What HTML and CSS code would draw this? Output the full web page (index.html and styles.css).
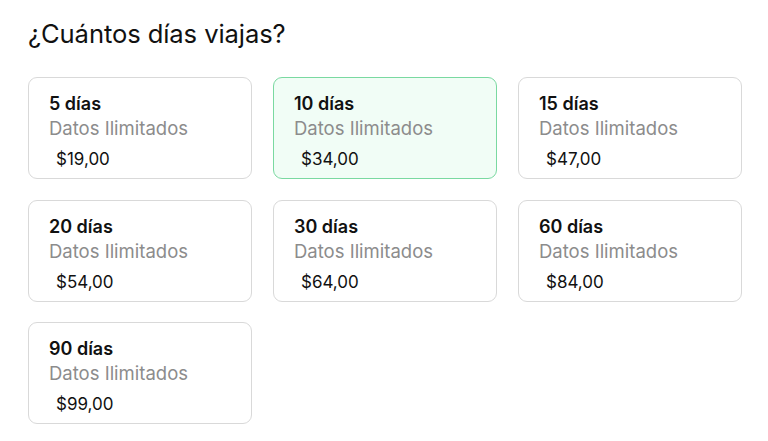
FILE: index.html
```html
<html>

<head>
    <meta charset="utf-8">
    <link rel="stylesheet" href="styles.css">
</head>

<body>
    <div class="page">
        <h1 class="title">¿Cuántos días viajas?</h1>

        <div class="plans">
            <div class="plan">
                <div class="plan-days">5 días</div>
                <div class="plan-data">Datos Ilimitados</div>
                <div class="plan-price">$19,00</div>
            </div>
            <div class="plan selected">
                <div class="plan-days">10 días</div>
                <div class="plan-data">Datos Ilimitados</div>
                <div class="plan-price">$34,00</div>
            </div>
            <div class="plan">
                <div class="plan-days">15 días</div>
                <div class="plan-data">Datos Ilimitados</div>
                <div class="plan-price">$47,00</div>
            </div>
            <div class="plan">
                <div class="plan-days">20 días</div>
                <div class="plan-data">Datos Ilimitados</div>
                <div class="plan-price">$54,00</div>
            </div>
            <div class="plan">
                <div class="plan-days">30 días</div>
                <div class="plan-data">Datos Ilimitados</div>
                <div class="plan-price">$64,00</div>
            </div>
            <div class="plan">
                <div class="plan-days">60 días</div>
                <div class="plan-data">Datos Ilimitados</div>
                <div class="plan-price">$84,00</div>
            </div>
            <div class="plan">
                <div class="plan-days">90 días</div>
                <div class="plan-data">Datos Ilimitados</div>
                <div class="plan-price">$99,00</div>
            </div>
        </div>
    </div>
</body>

</html>
```

FILE: styles.css
```css
body {
    margin: 0;
    font-family: Inter, 'Noto Sans', sans-serif;
    background: #ffffff;
    color: #111111;
}

.page {
    padding: 17px 26px 0 28px;
}

.title {
    margin: 0 0 26px 0;
    font-size: 25.6px;
    font-weight: 400;
    line-height: 34px;
    letter-spacing: -0.1px;
}

.plans {
    display: grid;
    grid-template-columns: repeat(3, 1fr);
    column-gap: 21px;
    row-gap: 20.5px;
}

.plan {
    border: 1px solid #d9d9d9;
    border-radius: 9px;
    padding: 13px 20px 0 20px;
    box-sizing: border-box;
    height: 102px;
}

.plan.selected {
    border-color: #7ad9a1;
    background: #f1fdf6;
}

.plan-days {
    font-size: 18px;
    font-weight: 600;
    line-height: 25px;
}

.plan-data {
    font-size: 18.5px;
    color: #8c8c8c;
    line-height: 25px;
}

.plan-price {
    font-size: 17px;
    line-height: 25px;
    margin-top: 6px;
    padding-left: 7px;
}
```
